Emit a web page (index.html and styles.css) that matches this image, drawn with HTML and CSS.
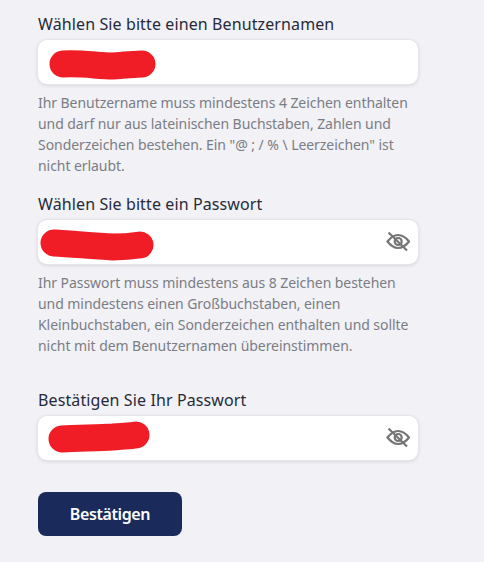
FILE: index.html
```html
<!DOCTYPE html>
<html lang="de">
<head>
<meta charset="utf-8">
<title>Registrierung</title>
<link rel="stylesheet" href="styles.css">
</head>
<body>
<form class="form">
  <div class="field">
    <label class="label">Wählen Sie bitte einen Benutzernamen</label>
    <div class="input">
      <svg class="scribble" viewBox="0 0 380 44"><path d="M25 24C45 23 60 26 75 26C90 25 100 24 104 24" /></svg>
    </div>
    <p class="hint">Ihr Benutzername muss mindestens 4 Zeichen enthalten und darf nur aus lateinischen Buchstaben, Zahlen und Sonderzeichen bestehen. Ein "@ ; / % \ Leerzeichen" ist nicht erlaubt.</p>
  </div>
  <div class="field field-second">
    <label class="label">Wählen Sie bitte ein Passwort</label>
    <div class="input">
      <svg class="scribble" viewBox="0 0 380 44"><path d="M16 23C35 24 55 26 75 27C85 27 95 26 102 25" /></svg>
      <svg class="eye" viewBox="0 0 24 24"><path d="M1.500 12.500C5 8 8.500 6 12 6S19.500 8 23 12.500C19.500 17 15.500 19 12 19S5 17 1.500 12.500Z"/><circle cx="12.200" cy="12.500" r="3.500"/><path d="M2.500 3.500L21 21.500"/></svg>
    </div>
    <p class="hint">Ihr Passwort muss mindestens aus 8 Zeichen bestehen und mindestens einen Großbuchstaben, einen Kleinbuchstaben, ein Sonderzeichen enthalten und sollte nicht mit dem Benutzernamen übereinstimmen.</p>
  </div>
  <div class="field field-third">
    <label class="label">Bestätigen Sie Ihr Passwort</label>
    <div class="input">
      <svg class="scribble" viewBox="0 0 380 44"><path d="M24 23C40 22 60 22 75 21C85 20 92 20 98 19" /></svg>
      <svg class="eye" viewBox="0 0 24 24"><path d="M1.500 12.500C5 8 8.500 6 12 6S19.500 8 23 12.500C19.500 17 15.500 19 12 19S5 17 1.500 12.500Z"/><circle cx="12.200" cy="12.500" r="3.500"/><path d="M2.500 3.500L21 21.500"/></svg>
    </div>
  </div>
  <button class="submit" type="button">Bestätigen</button>
</form>
</body>
</html>
```
FILE: styles.css
```css
* { box-sizing: border-box; }
html, body { margin: 0; height: 100%; }
body {
  background: #f1f1f6;
  font-family: "Noto Sans", "Open Sans", sans-serif;
  overflow: hidden;
}
.form { width: 380px; margin-left: 38px; padding-top: 13px; }
.label {
  display: block;
  height: 27px;
  font-size: 16px;
  line-height: 22px;
  letter-spacing: 0.11px;
  color: #262b3a;
}
.input {
  position: relative;
  height: 44px;
  background: #fff;
  border-radius: 9px;
  box-shadow: 0 0 0 1px #e6e6ea, 0 1px 4px rgba(0, 0, 0, 0.16);
}
.scribble {
  position: absolute;
  left: 0;
  top: 0;
  width: 380px;
  height: 44px;
  fill: none;
  stroke: #f01c26;
  stroke-width: 27;
  stroke-linecap: round;
  stroke-linejoin: round;
}
.eye {
  position: absolute;
  right: 8px;
  top: 9px;
  width: 24px;
  height: 24px;
  fill: none;
  stroke: #757575;
  stroke-width: 2.2;
}
.hint {
  margin: 8px 0 0;
  font-size: 14px;
  line-height: 21px;
  letter-spacing: -0.06px;
  color: #7b7d84;
}
.field-second { margin-top: 17px; }
.field-third { margin-top: 33px; }
.submit {
  display: block;
  width: 144px;
  height: 44px;
  margin-top: 32px;
  background: #1a2b5b;
  border: 0;
  border-radius: 8px;
  color: #fff;
  font: 600 16px/22px "Noto Sans", "Open Sans", sans-serif;
  letter-spacing: -0.4px;
}
```
